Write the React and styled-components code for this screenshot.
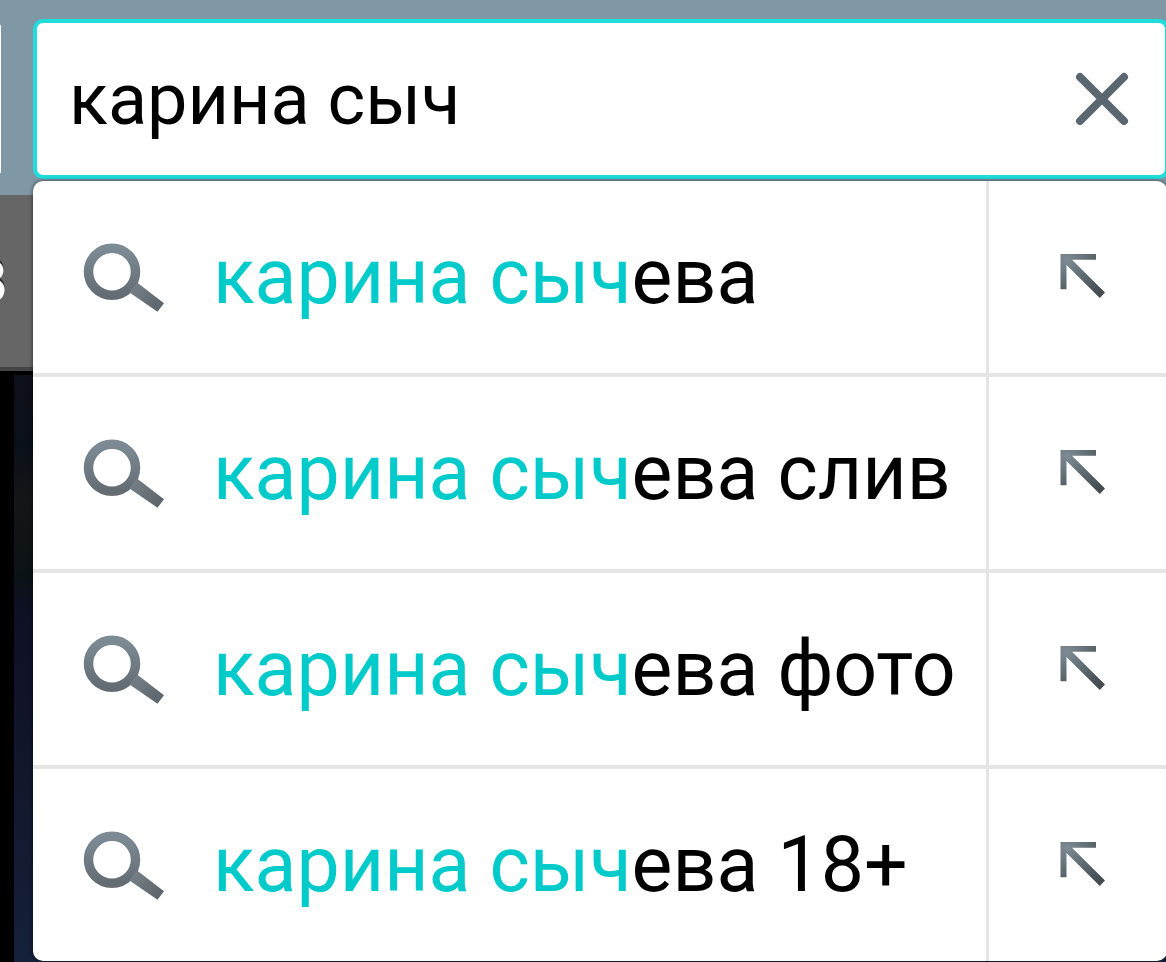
import React, { useState } from "react";
import styled, { createGlobalStyle } from "styled-components";

const suggestions = ["ева", "ева слив", "ева фото", "ева 18+"];

const SearchIcon = () => (
  <svg width="82" height="70" viewBox="0 0 82 70" aria-hidden="true">
    <defs>
      <linearGradient id="ring" x1="0" y1="0" x2="0" y2="1">
        <stop offset="0" stopColor="#7d8b94" />
        <stop offset="1" stopColor="#636c73" />
      </linearGradient>
      <linearGradient
        id="handle"
        gradientUnits="userSpaceOnUse"
        x1="50"
        y1="42"
        x2="78"
        y2="66"
      >
        <stop offset="0" stopColor="#747f87" />
        <stop offset="1" stopColor="#5d656b" />
      </linearGradient>
    </defs>
    <circle
      cx="29"
      cy="29.8"
      r="23.5"
      fill="none"
      stroke="url(#ring)"
      strokeWidth="9.5"
    />
    <path d="M54 40.5 L81 61.3 L74.500 69.800 L46.500 50.500 Z" fill="url(#handle)" />
  </svg>
);

const ArrowIcon = () => (
  <svg width="46" height="46" viewBox="0 0 46 46" aria-hidden="true">
    <defs>
      <radialGradient
        id="arrow"
        gradientUnits="userSpaceOnUse"
        cx="7"
        cy="7"
        r="46"
      >
        <stop offset="0" stopColor="#7d8b94" />
        <stop offset="0.5" stopColor="#5f6a71" />
        <stop offset="1" stopColor="#454b50" />
      </radialGradient>
    </defs>
    <path
      d="M0.500 1 H36 V6.800 H12 L45 39.500 L39.800 45 L6.500 12 V36.300 H0.500 Z"
      fill="url(#arrow)"
    />
  </svg>
);

const CloseIcon = () => (
  <svg width="54" height="54" viewBox="0 0 54 54" aria-hidden="true">
    <path
      d="M5 5 L49 49 M49 5 L5 49"
      fill="none"
      stroke="#5b6770"
      strokeWidth="8"
      strokeLinecap="round"
    />
  </svg>
);

const App = () => {
  const [query, setQuery] = useState("карина сыч");

  return (
    <Page>
      <GlobalStyle />
      <Header>
        <SideField />
        <SearchArea>
          <SearchBox>
            <SearchInput
              type="text"
              aria-label="Поиск"
              value={query}
              onChange={(e) => setQuery(e.target.value)}
            />
            <ClearButton
              type="button"
              aria-label="Очистить"
              onClick={() => setQuery("")}
            >
              <CloseIcon />
            </ClearButton>
          </SearchBox>
          <Dropdown>
            {suggestions.map((rest) => (
              <Row key={rest}>
                <Suggestion type="button">
                  <SearchIcon />
                  <span>
                    <Match>карина сыч</Match>
                    {rest}
                  </span>
                </Suggestion>
                <FillButton type="button" aria-label="Подставить">
                  <ArrowIcon />
                </FillButton>
              </Row>
            ))}
          </Dropdown>
        </SearchArea>
      </Header>
      <TabBar>
        <TabLabel>В</TabLabel>
      </TabBar>
      <Content>
        <Cover />
      </Content>
    </Page>
  );
};

const GlobalStyle = createGlobalStyle`
  * {
    box-sizing: border-box;
  }

  body {
    margin: 0;
    font-family: Roboto, sans-serif;
    background: #000;
  }
`;

const Page = styled.div`
  display: flex;
  flex-direction: column;
  min-height: 100vh;
  overflow: hidden;
`;

const Header = styled.header`
  display: flex;
  gap: 32px;
  padding: 19px 0 16px;
  background: #8097a5;
`;

const SideField = styled.div`
  width: 1px;
  margin: 6px 0;
  background: #fff;
`;

const SearchArea = styled.div`
  position: relative;
  flex: 1;
  min-width: 0;
  margin-right: -3px;
`;

const SearchBox = styled.div`
  display: flex;
  align-items: center;
  height: 160px;
  padding-left: 32px;
  border: 4px solid #20dddb;
  border-radius: 10px;
  background: #fff;
`;

const SearchInput = styled.input`
  flex: 1;
  min-width: 0;
  height: 100%;
  padding: 0;
  border: 0;
  outline: 0;
  background: none;
  color: #000;
  font-family: inherit;
  font-size: 72px;
`;

const ClearButton = styled.button`
  display: flex;
  padding: 34px 36px;
  border: 0;
  background: none;
  cursor: pointer;
`;

const Dropdown = styled.ul`
  position: absolute;
  top: calc(100% + 2px);
  left: 0;
  right: 2px;
  z-index: 1;
  margin: 0;
  padding: 0;
  list-style: none;
  border-radius: 10px;
  overflow: hidden;
  background: #fff;
  box-shadow: 0 0 4px rgba(0, 0, 0, 0.6);
`;

const Row = styled.li`
  display: flex;
  height: 192px;

  & + & {
    height: 196px;
    border-top: 4px solid #e5e5e5;
  }
`;

const Suggestion = styled.button`
  display: flex;
  align-items: center;
  gap: 48px;
  flex: 1;
  min-width: 0;
  padding: 0 0 0 50px;
  border: 0;
  background: none;
  color: #000;
  font-family: inherit;
  font-size: 77px;
  text-align: left;
  white-space: nowrap;
  cursor: pointer;

  svg {
    flex: none;
  }
`;

const Match = styled.span`
  color: #00cbca;
`;

const FillButton = styled.button`
  display: flex;
  align-items: center;
  width: 181px;
  padding: 0 0 2px 71px;
  border: 0;
  border-left: 3px solid #e5e5e5;
  background: none;
  cursor: pointer;
`;

const TabBar = styled.nav`
  display: flex;
  align-items: center;
  height: 176px;
  border-bottom: 4px solid #444;
  background: #666;
`;

const TabLabel = styled.span`
  display: flex;
  justify-content: flex-end;
  width: 8px;
  color: #fff;
  font-size: 60px;
  text-shadow: 0 -3px 0 #333;
`;

const Content = styled.main`
  display: flex;
  flex: 1;
  padding: 4px 0 0 14px;
  background: #000;
`;

const Cover = styled.div`
  flex: 1;
  background: linear-gradient(
    #0d0f1a 0%,
    #0a1018 12%,
    #141518 22%,
    #0b1216 34%,
    #0e1024 40%,
    #12162a 65%,
    #14203a 100%
  );
`;

export default App;
